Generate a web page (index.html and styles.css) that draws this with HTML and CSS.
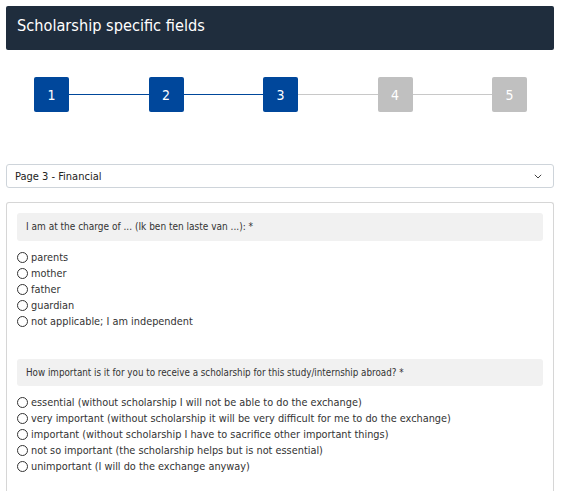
FILE: index.html
```html
<!DOCTYPE html>
<html>
<head>
<meta charset="utf-8">
<link rel="stylesheet" href="styles.css">
</head>
<body>
<div class="page">
  <div class="header">Scholarship specific fields</div>
  <div class="steps">
    <div class="step done">1</div>
    <div class="line done"></div>
    <div class="step done">2</div>
    <div class="line done"></div>
    <div class="step done">3</div>
    <div class="line"></div>
    <div class="step">4</div>
    <div class="line"></div>
    <div class="step">5</div>
  </div>
  <div class="select">
    <span>Page 3 - Financial</span>
    <svg class="chev" width="8" height="5" viewBox="0 0 8 5"><path d="M0.8 0.8 L4 4 L7.2 0.8" fill="none" stroke="#444" stroke-width="1"/></svg>
  </div>
  <div class="panel">
    <div class="question">I am at the charge of ... (Ik ben ten laste van ...): *</div>
    <ul class="options">
      <li><span class="radio"></span>parents</li>
      <li><span class="radio"></span>mother</li>
      <li><span class="radio"></span>father</li>
      <li><span class="radio"></span>guardian</li>
      <li><span class="radio"></span>not applicable; I am independent</li>
    </ul>
    <div class="question q2">How important is it for you to receive a scholarship for this study/internship abroad? *</div>
    <ul class="options">
      <li><span class="radio"></span>essential (without scholarship I will not be able to do the exchange)</li>
      <li><span class="radio"></span>very important (without scholarship it will be very difficult for me to do the exchange)</li>
      <li><span class="radio"></span>important (without scholarship I have to sacrifice other important things)</li>
      <li><span class="radio"></span>not so important (the scholarship helps but is not essential)</li>
      <li><span class="radio"></span>unimportant (I will do the exchange anyway)</li>
    </ul>
  </div>
</div>
</body>
</html>
```
FILE: styles.css
```css
* { box-sizing: border-box; }
body {
  margin: 0;
  font-family: "DejaVu Sans Condensed", "DejaVu Sans", sans-serif;
  color: #333;
  background: #fff;
}
.page {
  padding: 6px 14px 0 6px;
}
.header {
  background: #1f2d3d;
  color: #fff;
  font-size: 16.2px;
  height: 44px;
  line-height: 40px;
  padding-left: 11px;
  border-radius: 2px;
}
.steps {
  display: flex;
  padding: 27px 27px 0 28px;
  height: 114px;
  align-items: flex-start;
}
.step {
  width: 35px;
  height: 35px;
  flex: none;
  background: #c0c0c0;
  color: #fff;
  font-size: 14px;
  display: flex;
  align-items: center;
  justify-content: center;
  border-radius: 2px;
}
.step.done { background: #00479b; }
.line {
  flex: 1;
  height: 1px;
  background: #c8c8c8;
  margin-top: 17px;
}
.line.done { background: #00479b; }
.select {
  height: 24px;
  border: 1px solid #ced4da;
  border-radius: 3px;
  display: flex;
  align-items: center;
  justify-content: space-between;
  padding: 0 11px 0 8px;
  font-size: 11px;
  color: #222;
}
.chev { margin-top: 1px; }
.panel {
  margin-top: 14px;
  border: 1px solid #d6d6d6;
  border-bottom: none;
  border-radius: 3px 3px 0 0;
  padding: 10px 10px 20px 10px;
  height: 300px;
}
.question {
  background: #f1f1f1;
  border-radius: 3px;
  font-size: 10px;
  height: 28px;
  line-height: 28px;
  padding-left: 9px;
  color: #333;
}
.question.q2 {
  font-size: 9.75px;
  height: 27px;
  line-height: 27px;
}
.options {
  list-style: none;
  margin: 8px 0 30px 0;
  padding: 0;
  font-size: 10.85px;
}
.options li {
  height: 16px;
  display: flex;
  align-items: center;
  color: #333;
}
.radio {
  width: 11px;
  height: 11px;
  border: 1px solid #333;
  border-radius: 50%;
  margin-right: 3px;
  flex: none;
}
```
